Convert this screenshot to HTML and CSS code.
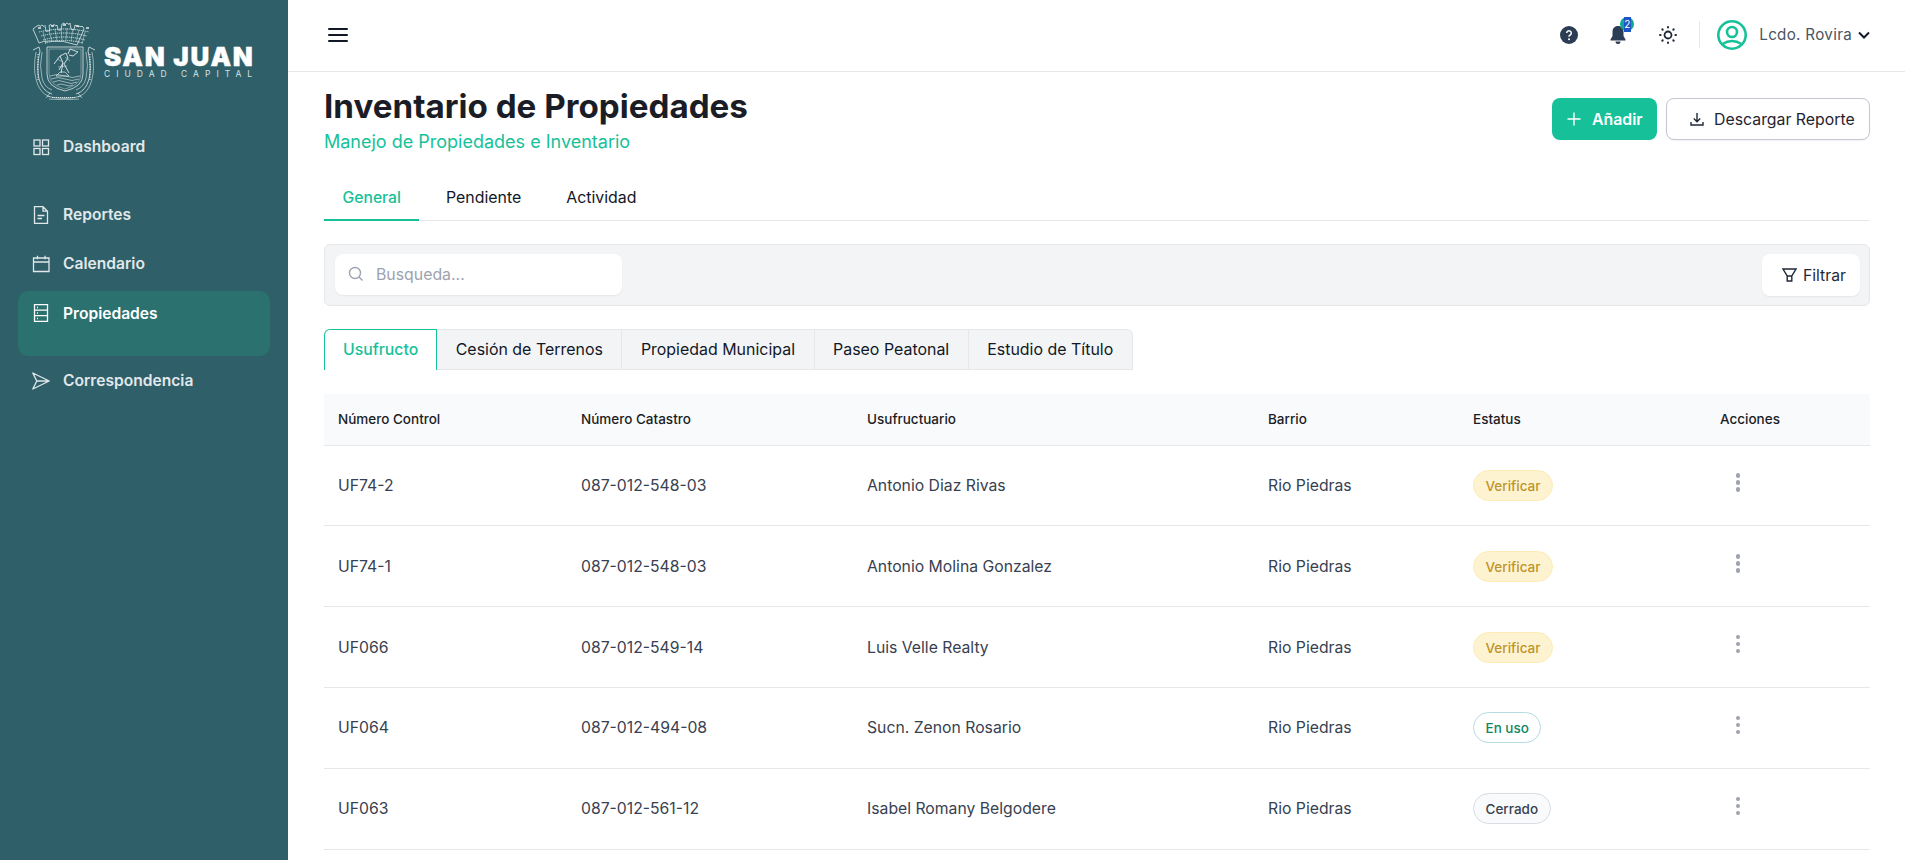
FILE: index.html
```html
<!DOCTYPE html>
<html lang="es">
<head>
    <meta charset="UTF-8">
    <meta name="viewport" content="width=device-width, initial-scale=1.0">
    <title>Inventario de Propiedades</title>
    <link rel="stylesheet" href="styles.css">
</head>
<body>
    <aside class="sidebar">
        <div class="logo">
            <svg class="crest" width="64" height="78" viewBox="0 0 64 78" fill="none" stroke="#dfe9ea" stroke-width="0.6">
                <!-- corona -->
                <path d="M5 4l2-1 1 1.500 2-1.500 2 1.500 1-1 1 6 4-1-1-5 2-1 1 1.500 2-1.500 2 1.500 1-1 1 5 3 0 1-6 2-1 1 1.500 2-1.500 2 1.500 1-1.500 1 6 3 1 1-5 2 1 1 1 2-1 1 1 1-1 1 1 1 2-7 16q-13-5-28-4q-6 0-10 2l-6-14z" stroke-width="0.8"/>
                <path d="M7 10q25-6 50 0M9 14q23-6 46 0M11 18q21-6 42 0M13 21q19-5 38 0" stroke-dasharray="1.200 0.800" stroke-width="1"/>
                <path d="M11 10l3 12M17 8l3 12M23 7l2 12M29 6l1 12M35 6l-1 12M41 7l-2 12M47 8l-3 12M53 10l-3 12" stroke-width="0.5"/>
                <path d="M6 6l3 0M19 4l3 0M31 3l3 0M44 4l3 0M54 6l3 0" stroke-width="1.500"/>
                <!-- escudo -->
                <path d="M15 25h36v27q0 13-18 17q-18-4-18-17z" stroke-width="0.8"/>
                <path d="M17 27h32v25q0 11-16 15q-16-4-16-15z" stroke-width="0.4"/>
                <path d="M18 54q7-3 15 0t15 0M19 57q7-3 14 0t14 0M21 60q6-3 12 0t12 0M25 63q4-2 8 0t8 0" stroke-width="0.6"/>
                <path d="M22 42l6-8 3 7-4 7M28 34l6-3 2 5-4 6 5 9M31 41l-2 10M36 32l2-5 8 3-5 4-4-1" stroke-width="0.9"/>
                <path d="M25 37l6 3M26 45l9-1M33 35l5 4" stroke-width="0.5"/>
                <path d="M24 54l4-4 5 0 4 4z" stroke-width="0.7"/>
                <!-- adornos -->
                <path d="M1 28l6-3 1 4q-4 16-1 28q3 12 13 15" stroke-width="0.8"/>
                <path d="M4 30q-3 16 0 27q3 14 14 18M10 30q-3 14 0 26q2 9 10 12" stroke-width="0.6"/>
                <path d="M63 28l-6-3-1 4q4 16 1 28q-3 12-13 15" stroke-width="0.8"/>
                <path d="M60 30q3 16 0 27q-3 14-14 18M54 30q3 14 0 26q-2 9-10 12" stroke-width="0.6"/>
                <path d="M6 32l0 26M58 32l0 26" stroke-dasharray="1 1.500" stroke-width="1.200"/>
                <path d="M15 74q17 5 34 0M17 77q15 1.500 30 0M18 71l-4 5M46 71l4 5" stroke-width="0.6"/>
                <path d="M20 75.500h24" stroke-dasharray="1.200 0.800" stroke-width="1"/>
            </svg>
            <div class="wordmark">
                <div class="wordmark-name">SAN JUAN</div>
                <div class="wordmark-sub">CIUDAD CAPITAL</div>
            </div>
        </div>

        <nav class="menu">
            <a class="menu-item">
                <svg width="18" height="18" viewBox="0 0 18 18" fill="none" stroke="currentColor" stroke-width="1.300"><rect x="2" y="2" width="6" height="6"/><rect x="10.500" y="2" width="6" height="6"/><rect x="2" y="10.500" width="6" height="6"/><rect x="10.500" y="10.500" width="6" height="6"/></svg>
                Dashboard
            </a>
            <a class="menu-item menu-item-group">
                <svg width="18" height="18" viewBox="0 0 18 18" fill="none" stroke="currentColor" stroke-width="1.300"><path d="M2.500.700h8.500l4.500 4.500v12.100h-13zM11 .700v4.500h4.500M5.500 9.500h7M5.500 12.500h4.500"/></svg>
                Reportes
            </a>
            <a class="menu-item">
                <svg width="18" height="18" viewBox="0 0 18 18" fill="none" stroke="currentColor" stroke-width="1.300"><path d="M1.500 3h15.500v13.500h-15.500zM1.500 7h15.500M5.500 .8v3.500M13 .8v3.500"/></svg>
                Calendario
            </a>
            <a class="menu-item menu-item-active">
                <svg width="18" height="18" viewBox="0 0 18 18" fill="none" stroke="currentColor" stroke-width="1.300"><path d="M2.500.7h13v16.600h-13zM2.500 6.200h13M2.500 11.700h13M5 3.500h1M5 9h1M5 14.500h1"/></svg>
                Propiedades
            </a>
            <a class="menu-item">
                <svg width="18" height="18" viewBox="0 0 18 18" fill="none" stroke="currentColor" stroke-width="1.300" stroke-linejoin="round"><path d="M.8 1l16.400 8-16.400 8 4-8zM4.800 9h12.400"/></svg>
                Correspondencia
            </a>
        </nav>
    </aside>

    <div class="page">
        <header class="topbar">
            <button class="burger" aria-label="Menu">
                <svg width="20" height="16" viewBox="0 0 20 16" fill="none" stroke="#111827" stroke-width="2" stroke-linecap="round"><path d="M1 2h18M1 8h18M1 14h18"/></svg>
            </button>
            <div class="topbar-right">
                <svg class="top-icon" width="18" height="18" viewBox="0 0 18 18"><circle cx="9" cy="9" r="9" fill="#2b3d54"/><path d="M6.700 7a2.300 2.300 0 1 1 3.500 2c-.8.500-1.200.9-1.200 1.700" fill="none" stroke="#fff" stroke-width="1.500"/><circle cx="9" cy="13.300" r="1" fill="#fff"/></svg>
                <div class="bell">
                    <svg width="16" height="18" viewBox="0 0 16 18"><path d="M8 0c-3.500 0-5.500 2.500-5.500 6v4L.5 13.500v1h15v-1L13.500 10V6C13.500 2.500 11.500 0 8 0zM5.500 15.500a2.500 2.500 0 0 0 5 0z" fill="#2b3d54"/></svg>
                    <span class="bell-count"><span class="bell-num">2</span></span>
                </div>
                <svg class="top-icon" width="20" height="20" viewBox="0 0 20 20" fill="none" stroke="#1f2937" stroke-width="2" stroke-linecap="round"><circle cx="10" cy="10" r="3.500" stroke-width="1.800"/><path d="M10 2v.6M10 17.400v.6M2 10h.6M17.400 10h.6M4.300 4.300l.4.400M15.300 15.300l.4.400M4.300 15.700l.4-.4M15.300 4.700l.4-.4"/></svg>
                <span class="top-divider"></span>
                <div class="user">
                    <svg width="30" height="30" viewBox="0 0 30 30" fill="none" stroke="#16c199" stroke-width="2.600"><circle cx="15" cy="15" r="13.700"/><circle cx="15" cy="12" r="5"/><path d="M5.500 24q9.500-6 19 0"/></svg>
                    <span class="user-name">Lcdo. Rovira</span>
                    <svg width="12" height="8" viewBox="0 0 12 8" fill="none" stroke="#111827" stroke-width="2"><path d="M1 1.500l5 5 5-5"/></svg>
                </div>
            </div>
        </header>

        <main class="content">
            <div class="title-row">
                <div>
                    <h1>Inventario de Propiedades</h1>
                    <p class="subtitle">Manejo de Propiedades e Inventario</p>
                </div>
                <div class="title-actions">
                    <button class="btn btn-add">
                        <svg width="16" height="16" viewBox="0 0 16 16" stroke="#fff" stroke-width="1.400"><path d="M8 1.500v13M1.500 8h13"/></svg>
                        Añadir
                    </button>
                    <button class="btn btn-report">
                        <svg width="16" height="16" viewBox="0 0 16 16" fill="none" stroke="#1f2937" stroke-width="1.400"><path d="M8 2v8.500M4.800 7.500L8 10.700l3.200-3.200M2 11v3h12v-3"/></svg>
                        Descargar Reporte
                    </button>
                </div>
            </div>

            <div class="tabs">
                <a class="tab tab-active">General</a>
                <a class="tab">Pendiente</a>
                <a class="tab">Actividad</a>
            </div>

            <div class="toolbar">
                <div class="search">
                    <svg width="16" height="16" viewBox="0 0 16 16" fill="none" stroke="#9ca3af" stroke-width="1.400"><circle cx="7" cy="7" r="5.500"/><path d="M11 11l3.500 3.500"/></svg>
                    <span>Busqueda...</span>
                </div>
                <button class="filter">
                    <svg width="15" height="14" viewBox="0 0 15 14" fill="none" stroke="#1f2937" stroke-width="1.400"><path d="M1 1h13L9.800 8v5H5.200V8zM5.200 8h4.600"/></svg>
                    Filtrar
                </button>
            </div>

            <div class="type-tabs">
                <a class="type-tab type-tab-active">Usufructo</a>
                <a class="type-tab">Cesión de Terrenos</a>
                <a class="type-tab">Propiedad Municipal</a>
                <a class="type-tab">Paseo Peatonal</a>
                <a class="type-tab">Estudio de Título</a>
            </div>

            <table class="list">
                <thead>
                    <tr>
                        <th class="col-control">Número Control</th>
                        <th class="col-catastro">Número Catastro</th>
                        <th class="col-usu">Usufructuario</th>
                        <th class="col-barrio">Barrio</th>
                        <th class="col-estatus">Estatus</th>
                        <th>Acciones</th>
                    </tr>
                </thead>
                <tbody>
                    <tr>
                        <td>UF74-2</td><td>087-012-548-03</td><td>Antonio Diaz Rivas</td><td>Rio Piedras</td>
                        <td><span class="badge badge-check">Verificar</span></td>
                        <td><span class="dots"><i></i><i></i><i></i></span></td>
                    </tr>
                    <tr>
                        <td>UF74-1</td><td>087-012-548-03</td><td>Antonio Molina Gonzalez</td><td>Rio Piedras</td>
                        <td><span class="badge badge-check">Verificar</span></td>
                        <td><span class="dots"><i></i><i></i><i></i></span></td>
                    </tr>
                    <tr>
                        <td>UF066</td><td>087-012-549-14</td><td>Luis Velle Realty</td><td>Rio Piedras</td>
                        <td><span class="badge badge-check">Verificar</span></td>
                        <td><span class="dots"><i></i><i></i><i></i></span></td>
                    </tr>
                    <tr>
                        <td>UF064</td><td>087-012-494-08</td><td>Sucn. Zenon Rosario</td><td>Rio Piedras</td>
                        <td><span class="badge badge-use">En uso</span></td>
                        <td><span class="dots"><i></i><i></i><i></i></span></td>
                    </tr>
                    <tr>
                        <td>UF063</td><td>087-012-561-12</td><td>Isabel Romany Belgodere</td><td>Rio Piedras</td>
                        <td><span class="badge badge-closed">Cerrado</span></td>
                        <td><span class="dots"><i></i><i></i><i></i></span></td>
                    </tr>
                </tbody>
            </table>
        </main>
    </div>
</body>
</html>
```

FILE: styles.css
```css
* {
    box-sizing: border-box;
}
html, body {
    height: 100%;
}
body {
    margin: 0;
    display: flex;
    height: 860px;
    overflow: hidden;
    font-family: Inter, "Noto Sans", sans-serif;
    color: #1f2937;
    background-color: white;
}
button {
    font-family: inherit;
    cursor: pointer;
}

/* sidebar */
.sidebar {
    width: 288px;
    flex-shrink: 0;
    background-color: #2f5f68;
    padding: 22px 18px 0;
}
.logo {
    display: flex;
    align-items: flex-start;
    gap: 8px;
    padding-left: 14px;
    height: 100px;
}
.crest {
    flex-shrink: 0;
}
.wordmark {
    padding-top: 23px;
    width: 150px;
}
.wordmark-name {
    font-weight: 900;
    font-size: 26px;
    line-height: 24px;
    letter-spacing: 1.7px;
    -webkit-text-stroke: 0.4px white;
    color: white;
    white-space: nowrap;
}
.wordmark-sub {
    font-size: 8.5px;
    line-height: 11px;
    letter-spacing: 6px;
    color: #d5e1e3;
    white-space: nowrap;
}
.menu {
    display: flex;
    flex-direction: column;
}
.menu-item {
    display: flex;
    align-items: center;
    gap: 13px;
    height: 49px;
    padding-left: 14px;
    border-radius: 10px;
    font-size: 15.6px;
    font-weight: 600;
    color: #e1e8ea;
}
.menu-item-group {
    margin-top: 19px;
}
.menu-item-active {
    height: 65px;
    padding-bottom: 21px;
    margin-top: 3px;
    background-color: #2a716f;
    color: white;
}

/* header */
.page {
    flex: 1;
    min-width: 0;
}
.topbar {
    height: 72px;
    display: flex;
    align-items: center;
    justify-content: space-between;
    padding: 0 35px 2px 40px;
    border-bottom: 1px solid #e5e7eb;
}
.burger {
    border: none;
    background: none;
    padding: 0;
    display: flex;
}
.topbar-right {
    display: flex;
    align-items: center;
}
.top-icon {
    display: block;
}
.bell {
    position: relative;
    display: flex;
    margin-left: 32px;
    margin-right: 32px;
}
.bell-count {
    position: absolute;
    top: -9px;
    right: -8px;
    display: flex;
    justify-content: center;
    width: 14px;
    height: 14px;
    border-radius: 50%;
    background-color: #12a594;
}
.bell-num {
    width: 7px;
    height: 15px;
    background-color: #1a56c4;
    color: white;
    font-size: 10px;
    line-height: 14px;
    text-align: center;
}
.top-divider {
    width: 1px;
    height: 27px;
    margin: 0 17px 0 21px;
    background-color: #e5e7eb;
}
.user {
    display: flex;
    align-items: center;
}
.user-name {
    margin: 0 6px 0 12px;
    font-size: 15.2px;
    letter-spacing: 0.3px;
    color: #4b5563;
}

/* content */
.content {
    padding: 0 35px 0 36px;
}
.title-row {
    display: flex;
    justify-content: space-between;
    height: 102px;
}
h1 {
    margin: 14px 0 0;
    font-size: 33.2px;
    line-height: 40px;
    font-weight: 700;
    color: #1a1d26;
}
.subtitle {
    margin: 4px 0 0;
    font-size: 18px;
    line-height: 24px;
    color: #16c199;
}
.title-actions {
    display: flex;
    gap: 9px;
    padding-top: 26px;
}
.btn {
    display: flex;
    align-items: center;
    height: 42px;
    border-radius: 8px;
    font-size: 15.85px;
}
.btn-add {
    width: 105px;
    gap: 10px;
    padding: 0 0 0 14px;
    border: none;
    background-color: #16c199;
    color: white;
    font-weight: 600;
}
.btn-report {
    width: 204px;
    gap: 9px;
    padding: 0 0 0 22px;
    border: 1px solid #c3c7d1;
    background-color: white;
    color: #1f2430;
    box-shadow: 0 1px 2px rgba(0, 0, 0, 0.05);
}
.tabs {
    display: flex;
    height: 47px;
    border-bottom: 1px solid #e5e7eb;
}
.tab {
    height: 47px;
    padding: 13px 18.5px 0;
    font-size: 15.9px;
    line-height: 22px;
    font-weight: 400;
    color: #111827;
}
.tab + .tab {
    margin-left: 8px;
}
.tab-active {
    font-size: 15.7px;
    font-weight: 500;
    color: #16c199;
    border-bottom: 2px solid #16c199;
}
.toolbar {
    display: flex;
    align-items: center;
    justify-content: space-between;
    height: 62px;
    margin-top: 23px;
    padding: 0 9px 0 10px;
    background-color: #f3f4f6;
    border: 1px solid #e5e7eb;
    border-radius: 6px;
}
.search {
    display: flex;
    align-items: center;
    gap: 12px;
    width: 287px;
    height: 41px;
    margin-bottom: 2px;
    padding-left: 13px;
    background-color: white;
    border-radius: 8px;
    box-shadow: 0 1px 2px rgba(0, 0, 0, 0.06);
    font-size: 15.85px;
    color: #9ca3af;
}
.filter {
    display: flex;
    align-items: center;
    gap: 6px;
    width: 98px;
    height: 42px;
    padding: 0 0 0 20px;
    border: none;
    border-radius: 8px;
    background-color: white;
    box-shadow: 0 1px 2px rgba(0, 0, 0, 0.06);
    font-size: 15.7px;
    color: #1f2937;
}
.type-tabs {
    display: flex;
    margin-top: 23px;
    height: 41px;
}
.type-tab {
    height: 41px;
    padding: 0 18.5px;
    display: flex;
    align-items: center;
    font-size: 15.95px;
    font-weight: 400;
    color: #111827;
    background-color: #f3f4f6;
    border: 1px solid #e5e7eb;
    border-left: none;
}
.type-tab:last-child {
    border-top-right-radius: 6px;
}
.type-tab-active {
    padding: 0 18px 1px;
    font-size: 15.8px;
    font-weight: 500;
    color: #16c199;
    background-color: white;
    border: 1px solid #16c199;
    border-bottom: none;
    border-top-left-radius: 6px;
}

/* table */
.list {
    width: 100%;
    margin-top: 24px;
    border-collapse: collapse;
    table-layout: fixed;
}
.list th {
    height: 51px;
    padding: 0 14px;
    text-align: left;
    font-size: 13.5px;
    font-weight: 550;
    color: #1a1d26;
    background-color: #f9fafb;
    border-bottom: 1px solid #e5e7eb;
}
.list td {
    height: 80.85px;
    padding: 0 14px;
    font-size: 15.75px;
    color: #374151;
    border-bottom: 1px solid #e5e7eb;
}
.col-control {
    width: 243px;
}
.col-catastro {
    width: 286px;
}
.col-usu {
    width: 401px;
}
.col-barrio {
    width: 205px;
}
.col-estatus {
    width: 247px;
}
.badge {
    display: inline-block;
    padding: 0 11.5px;
    height: 31px;
    line-height: 30px;
    border: 1px solid;
    border-radius: 16px;
    font-size: 13.5px;
    font-weight: 500;
}
.badge-check {
    background-color: #fef3d1;
    border-color: #fdecb5;
    color: #bf942c;
}
.badge-use {
    background-color: white;
    border-color: #b5dbe3;
    color: #12875f;
}
.badge-closed {
    background-color: #f9fafb;
    border-color: #d9dce3;
    color: #374151;
}
.dots {
    display: inline-flex;
    flex-direction: column;
    gap: 2.5px;
    margin: 0 0 6px 15.5px;
    vertical-align: middle;
}
.dots i {
    width: 4.5px;
    height: 4.5px;
    border-radius: 50%;
    background-color: #9ca3af;
}
```
